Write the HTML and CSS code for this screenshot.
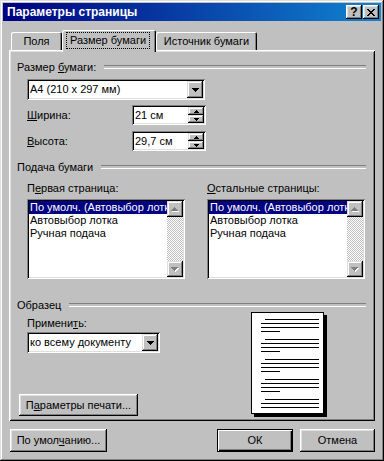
FILE: index.html
```html
<!DOCTYPE html>
<html lang="ru">
<head>
    <meta charset="UTF-8">
    <meta name="viewport" content="width=device-width, initial-scale=1.0">
    <title>Параметры страницы</title>

    <link rel="stylesheet" href="styles.css">
</head>
<body>
    <div class="window">
        <div class="titlebar">
            <span class="title">Параметры страницы</span>
            <span class="tbtn help">?</span>
            <span class="tbtn close">
                <svg width="8" height="7" shape-rendering="crispEdges"><path d="M0 0h2v1h-2z M6 0h2v1h-2z M1 1h2v1h-2z M5 1h2v1h-2z M2 2h4v1h-4z M3 3h2v1h-2z M2 4h4v1h-4z M1 5h2v1h-2z M5 5h2v1h-2z M0 6h2v1h-2z M6 6h2v1h-2z"/></svg>
            </span>
        </div>

        <div class="content">
            <div class="tabs">
                <div class="tab tab-fields">Поля</div>
                <div class="tab tab-active"><span class="focus">Размер бумаги</span></div>
                <div class="tab tab-source">Источник бумаги</div>
            </div>

            <div class="panel">
                <!-- размер бумаги -->
                <div class="group-head"><span>Размер <u>б</u>умаги:</span></div>
                <div class="combo combo-size indent">
                    <span class="combo-text">A4 (210 x 297 мм)</span>
                    <span class="drop">
                        <svg width="7" height="4" shape-rendering="crispEdges"><path d="M0 0h7v1h-1v1h-1v1h-1v1h-1v-1h-1v-1h-1v-1h-1z"/></svg>
                    </span>
                </div>
                <div class="spin-row indent">
                    <span class="spin-label"><u>Ш</u>ирина:</span>
                    <div class="spin">
                        <span class="spin-text">21 см</span>
                        <span class="spin-btns">
                            <span class="spin-btn"><svg width="5" height="3" shape-rendering="crispEdges"><path d="M2 0h1v1h1v1h1v1h-5v-1h1v-1h1z"/></svg></span>
                            <span class="spin-btn"><svg width="5" height="3" shape-rendering="crispEdges"><path d="M0 0h5v1h-1v1h-1v1h-1v-1h-1v-1h-1z"/></svg></span>
                        </span>
                    </div>
                </div>
                <div class="spin-row indent">
                    <span class="spin-label"><u>В</u>ысота:</span>
                    <div class="spin">
                        <span class="spin-text">29,7 см</span>
                        <span class="spin-btns">
                            <span class="spin-btn"><svg width="5" height="3" shape-rendering="crispEdges"><path d="M2 0h1v1h1v1h1v1h-5v-1h1v-1h1z"/></svg></span>
                            <span class="spin-btn"><svg width="5" height="3" shape-rendering="crispEdges"><path d="M0 0h5v1h-1v1h-1v1h-1v-1h-1v-1h-1z"/></svg></span>
                        </span>
                    </div>
                </div>

                <!-- подача бумаги -->
                <div class="group-head feed-head"><span>Подача бумаги</span></div>
                <div class="trays indent">
                    <span class="tray-label">П<u>е</u>рвая страница:</span>
                    <span class="tray-label"><u>О</u>стальные страницы:</span>
                    <div class="listbox">
                        <div class="list">
                            <div class="item selected">По умолч. (Автовыбор лотка)</div>
                            <div class="item">Автовыбор лотка</div>
                            <div class="item">Ручная подача</div>
                        </div>
                        <div class="scroll">
                            <span class="sbtn"><svg width="8" height="5" shape-rendering="crispEdges"><path fill="#fff" d="M4 1h1v1h1v1h1v1h1v1h-7v-1h1v-1h1v-1h1z"/><path fill="#808080" d="M3 0h1v1h1v1h1v1h1v1h-7v-1h1v-1h1v-1h1z"/></svg></span>
                            <span class="track"></span>
                            <span class="sbtn"><svg width="8" height="5" shape-rendering="crispEdges"><path fill="#fff" d="M1 1h7v1h-1v1h-1v1h-1v1h-1v-1h-1v-1h-1v-1h-1z"/><path fill="#808080" d="M0 0h7v1h-1v1h-1v1h-1v1h-1v-1h-1v-1h-1v-1h-1z"/></svg></span>
                        </div>
                    </div>
                    <div class="listbox">
                        <div class="list">
                            <div class="item selected">По умолч. (Автовыбор лотка)</div>
                            <div class="item">Автовыбор лотка</div>
                            <div class="item">Ручная подача</div>
                        </div>
                        <div class="scroll">
                            <span class="sbtn"><svg width="8" height="5" shape-rendering="crispEdges"><path fill="#fff" d="M4 1h1v1h1v1h1v1h1v1h-7v-1h1v-1h1v-1h1z"/><path fill="#808080" d="M3 0h1v1h1v1h1v1h1v1h-7v-1h1v-1h1v-1h1z"/></svg></span>
                            <span class="track"></span>
                            <span class="sbtn"><svg width="8" height="5" shape-rendering="crispEdges"><path fill="#fff" d="M1 1h7v1h-1v1h-1v1h-1v1h-1v-1h-1v-1h-1v-1h-1z"/><path fill="#808080" d="M0 0h7v1h-1v1h-1v1h-1v1h-1v-1h-1v-1h-1v-1h-1z"/></svg></span>
                        </div>
                    </div>
                </div>

                <!-- образец -->
                <div class="group-head sample-head"><span>Образец</span></div>
                <div class="sample">
                    <div class="sample-left">
                        <div class="apply-label indent">Примени<u>т</u>ь:</div>
                        <div class="combo combo-apply indent">
                            <span class="combo-text">ко всему документу</span>
                            <span class="drop">
                                <svg width="7" height="4" shape-rendering="crispEdges"><path d="M0 0h7v1h-1v1h-1v1h-1v1h-1v-1h-1v-1h-1v-1h-1z"/></svg>
                            </span>
                        </div>
                        <div class="btn btn-print">П<u>а</u>раметры печати...</div>
                    </div>
                    <div class="page">
                        <svg width="71" height="100" shape-rendering="crispEdges">
                            <rect x="13" y="6" width="54" height="1"/>
                            <rect x="9" y="10" width="58" height="1"/>
                            <rect x="9" y="14" width="58" height="1"/>
                            <rect x="9" y="18" width="19" height="1"/>
                            <rect x="13" y="26" width="54" height="1"/>
                            <rect x="9" y="30" width="58" height="1"/>
                            <rect x="9" y="34" width="58" height="1"/>
                            <rect x="9" y="38" width="19" height="1"/>
                            <rect x="13" y="46" width="54" height="1"/>
                            <rect x="9" y="50" width="58" height="1"/>
                            <rect x="9" y="54" width="58" height="1"/>
                            <rect x="9" y="58" width="19" height="1"/>
                            <rect x="13" y="66" width="54" height="1"/>
                            <rect x="9" y="70" width="58" height="1"/>
                            <rect x="9" y="74" width="58" height="1"/>
                            <rect x="9" y="78" width="19" height="1"/>
                            <rect x="13" y="86" width="54" height="1"/>
                            <rect x="9" y="90" width="58" height="1"/>
                            <rect x="9" y="94" width="58" height="1"/>
                        </svg>
                    </div>
                </div>
            </div>

            <div class="footer">
                <div class="btn btn-defaults">По умол<u>ч</u>анию...</div>
                <div class="btn btn-ok">ОК</div>
                <div class="btn btn-cancel">Отмена</div>
            </div>
        </div>
    </div>
</body>
</html>
```

FILE: styles.css
```css
*{
    box-sizing: border-box;
}
body{
    margin: 0;
    background-color: #c0c0c0;
    font-family: "Liberation Sans", Arial, sans-serif;
    font-size: 11px;
    line-height: 13px;
    color: #000;
}
u{
    text-underline-offset: 1px;
}

.window{
    width: 384px;
    height: 461px;
    padding: 3px;
    background-color: #c0c0c0;
    box-shadow: inset -1px -1px #000, inset 1px 1px #dfdfdf, inset -2px -2px #808080, inset 2px 2px #fff;
}

/* заголовок окна */
.titlebar{
    display: flex;
    align-items: center;
    height: 18px;
    padding: 0 2px 0 4px;
    background: linear-gradient(to right, #000080, #1084d0);
    color: #fff;
    font-weight: bold;
    font-size: 12px;
}
.title{
    flex: 1;
}
.tbtn{
    display: flex;
    align-items: center;
    justify-content: center;
    width: 16px;
    height: 14px;
    background-color: #c0c0c0;
    color: #000;
    box-shadow: inset -1px -1px #000, inset 1px 1px #fff, inset -2px -2px #808080, inset 2px 2px #dfdfdf;
}
.help{
    margin-right: 1px;
    font-size: 12px;
    padding-top: 1px;
}

/* вкладки */
.content{
    padding: 9px 6px 0 6px;
}
.tabs{
    position: relative;
    z-index: 1;
    display: flex;
    align-items: flex-start;
    height: 20px;
    padding-left: 2px;
}
.tab{
    height: 18px;
    margin-top: 2px;
    line-height: 18px;
    text-align: center;
    background-color: #c0c0c0;
    border-radius: 2px 2px 0 0;
    box-shadow: inset 1px 1px #fff, inset -1px 0 #000, inset -2px 0 #808080;
}
.tab-fields{
    width: 51px;
}
.tab-source{
    width: 101px;
}
.tab-active{
    width: 94px;
    height: 22px;
    margin-top: 0;
    padding: 2px 6px 0 4px;
}
.focus{
    display: block;
    height: 17px;
    line-height: 15px;
    border: 1px dotted #000;
}

.panel{
    height: 371px;
    padding: 10px 9px 0 8px;
    box-shadow: inset 1px 1px #fff, inset -1px -1px #000, inset 2px 2px #dfdfdf, inset -2px -2px #808080;
}
.group-head{
    display: flex;
    height: 14px;
    line-height: 14px;
}
.group-head::after{
    content: "";
    flex: 1;
    height: 2px;
    margin: 5px 0 0 8px;
    border-top: 1px solid #808080;
    border-bottom: 1px solid #fff;
}
.indent{
    margin-left: 10px;
}

/* поля ввода */
.combo, .spin, .listbox{
    display: flex;
    padding: 2px;
    background-color: #fff;
    box-shadow: inset 1px 1px #808080, inset -1px -1px #fff, inset 2px 2px #000, inset -2px -2px #dfdfdf;
}
.combo{
    height: 21px;
}
.combo-size{
    width: 178px;
    margin-top: 5px;
}
.combo-text{
    flex: 1;
    padding-left: 1px;
    line-height: 17px;
    white-space: nowrap;
    overflow: hidden;
}
.drop, .spin-btn, .sbtn{
    display: flex;
    align-items: center;
    justify-content: center;
    background-color: #c0c0c0;
    box-shadow: inset -1px -1px #000, inset 1px 1px #dfdfdf, inset -2px -2px #808080, inset 2px 2px #fff;
}
.drop{
    width: 16px;
    height: 17px;
}

.spin-row{
    display: flex;
    align-items: center;
    height: 20px;
    margin-top: 5px;
}
.spin-row + .spin-row{
    margin-top: 6px;
}
.spin-label{
    width: 105px;
}
.spin{
    width: 74px;
    height: 20px;
}
.spin-text{
    flex: 1;
    padding-left: 1px;
    line-height: 16px;
}
.spin-btns{
    display: flex;
    flex-direction: column;
    width: 16px;
}
.spin-btn{
    height: 8px;
}

/* подача бумаги */
.feed-head{
    margin-top: 9px;
}
.trays{
    display: grid;
    grid-template-columns: 158px 158px;
    column-gap: 22px;
    row-gap: 4px;
    margin-top: 7px;
}
.tray-label{
    line-height: 14px;
}
.listbox{
    height: 80px;
}
.list{
    flex: 1;
    overflow: hidden;
}
.item{
    padding-left: 1px;
    white-space: nowrap;
}
.item.selected{
    background-color: #000080;
    color: #fff;
}
.scroll{
    display: flex;
    flex-direction: column;
    width: 16px;
}
.sbtn{
    height: 16px;
}
.track{
    flex: 1;
    background: repeating-conic-gradient(#fff 0 25%, #c0c0c0 0 50%) 0 0 / 2px 2px;
}

/* образец */
.sample-head{
    margin-top: 19px;
}
.sample{
    display: flex;
}
.sample-left{
    width: 234px;
}
.apply-label{
    margin-top: 4px;
    line-height: 14px;
}
.combo-apply{
    width: 133px;
    margin-top: 2px;
}
.page{
    width: 73px;
    height: 102px;
    border: 1px solid #000;
    background-color: #fff;
    box-shadow: 3px 3px 0 #000;
}
.page svg{
    display: block;
}

/* кнопки */
.btn{
    height: 23px;
    line-height: 23px;
    text-align: center;
    background-color: #c0c0c0;
    box-shadow: inset -1px -1px #000, inset 1px 1px #fff, inset -2px -2px #808080, inset 2px 2px #dfdfdf;
}
.btn-print{
    width: 119px;
    height: 22px;
    line-height: 22px;
    margin: 41px 0 0 2px;
}
.footer{
    display: flex;
    margin-top: 8px;
}
.btn-defaults{
    width: 97px;
    margin-left: 1px;
}
.btn-ok{
    width: 76px;
    margin-left: auto;
    box-shadow: inset 0 0 0 1px #000, inset 2px 2px #fff, inset -2px -2px #000, inset -3px -3px #808080;
}
.btn-cancel{
    width: 75px;
    margin-left: 7px;
}
```
